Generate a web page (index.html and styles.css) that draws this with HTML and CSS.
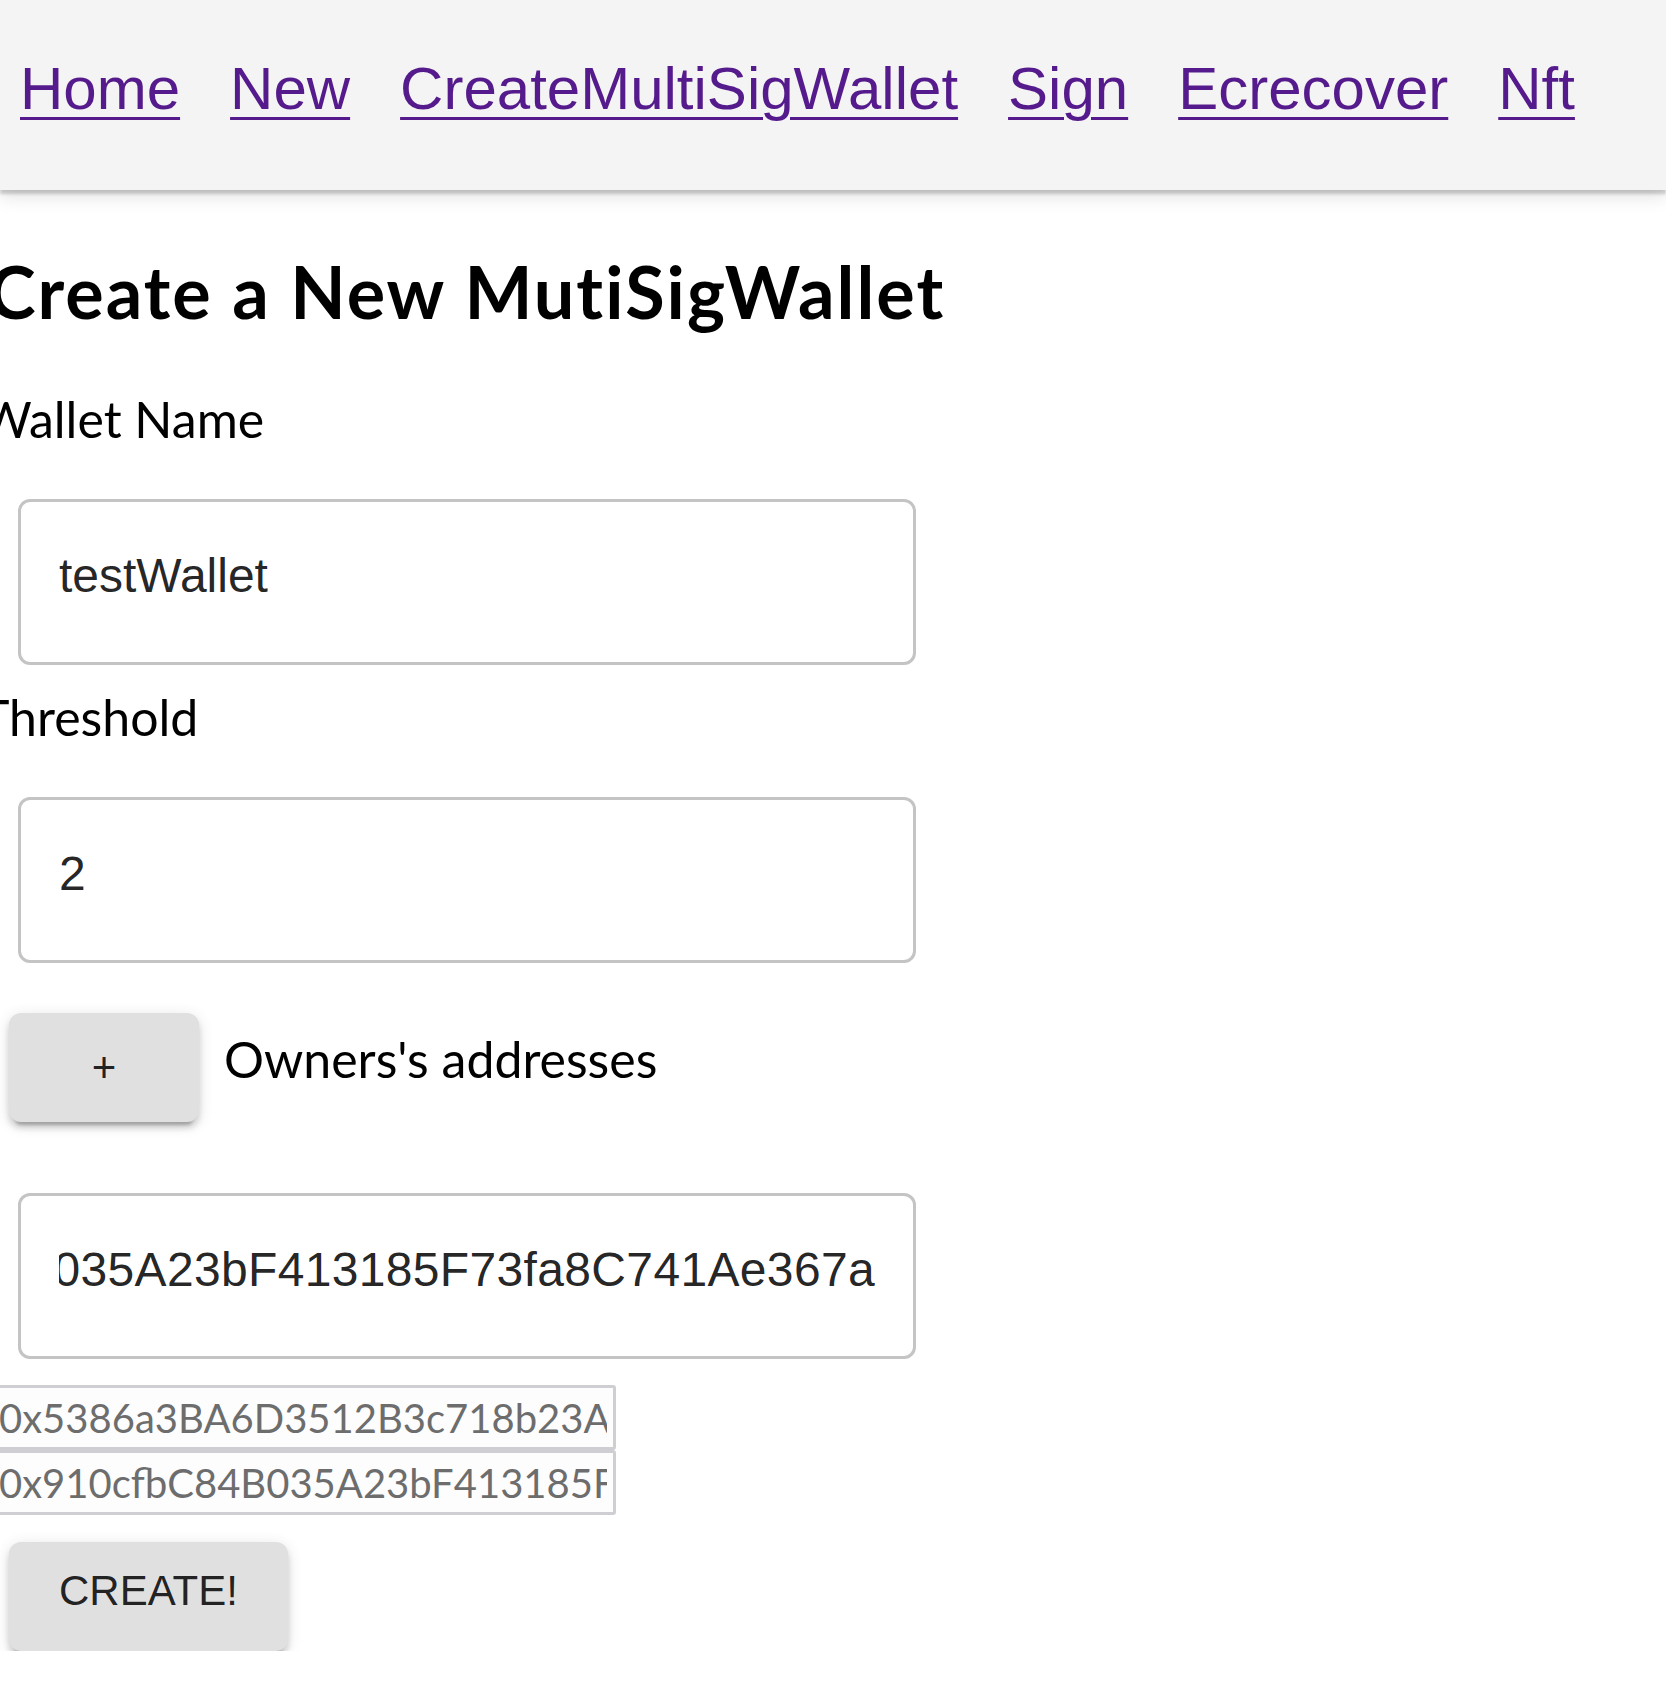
FILE: index.html
```html
<!DOCTYPE html>
<html lang="en">
<head>
<meta charset="utf-8">
<title>Create a New MutiSigWallet</title>
<link rel="stylesheet" href="styles.css">
</head>
<body>
<nav class="topbar">
  <a class="nav-link" href="#">Home</a>
  <a class="nav-link" href="#">New</a>
  <a class="nav-link" href="#">CreateMultiSigWallet</a>
  <a class="nav-link" href="#">Sign</a>
  <a class="nav-link" href="#">Ecrecover</a>
  <a class="nav-link" href="#">Nft</a>
</nav>
<main class="page">
  <h2 class="title">Create a New MutiSigWallet</h2>
  <form class="wallet-form">
    <label class="field-label" for="wallet-name">Wallet Name</label>
    <input class="field" id="wallet-name" type="text" value="testWallet">
    <label class="field-label label-threshold" for="threshold">Threshold</label>
    <input class="field" id="threshold" type="text" value="2">
    <div class="owners-row">
      <button class="btn btn-add" type="button">+</button>
      <span class="owners-label">Owners's addresses</span>
    </div>
    <div class="field field-scroll">
      <div class="field-clip"><span class="field-value">0x910cfbC84B035A23bF413185F73fa8C741Ae367a</span></div>
    </div>
    <ul class="owner-list">
      <li><input class="owner-input" type="text" disabled value="0x5386a3BA6D3512B3c718b23AC0e5F91a7dB2E4c6"></li>
      <li><input class="owner-input" type="text" disabled value="0x910cfbC84B035A23bF413185F73fa8C741Ae367a"></li>
    </ul>
    <button class="btn btn-create" type="button">CREATE!</button>
  </form>
</main>
</body>
</html>
```
FILE: styles.css
```css
html, body {
  margin: 0;
  padding: 0;
  background: #ffffff;
}
body {
  overflow: hidden;
  font-family: "Lato", "Noto Sans", sans-serif;
  color: #000;
}
.topbar {
  height: 190px;
  box-sizing: border-box;
  background: #f4f4f4;
  display: flex;
  align-items: flex-start;
  gap: 50px;
  padding: 54px 0 0 20px;
  box-shadow: 0 4px 3px rgba(0, 0, 0, 0.18), 0 8px 16px rgba(0, 0, 0, 0.10);
  position: relative;
  z-index: 1;
}
.nav-link {
  font-family: "Liberation Sans", Arial, sans-serif;
  font-size: 60px;
  line-height: 69px;
  color: #551a8b;
  text-decoration: underline;
  text-decoration-thickness: 3px;
  text-underline-offset: 8px;
}
.page {
  margin-left: -20px;
}
.title {
  font-family: "Lato", "Noto Sans", sans-serif;
  font-weight: 700;
  font-size: 72px;
  line-height: 86px;
  letter-spacing: 2px;
  margin: 58px 0 0 8px;
  white-space: nowrap;
}
.wallet-form {
  display: flex;
  flex-direction: column;
  align-items: flex-start;
}
.field-label {
  font-size: 50px;
  line-height: 60px;
  margin-top: 55px;
  white-space: nowrap;
}
.label-threshold {
  margin-top: 22px;
}
.field {
  box-sizing: border-box;
  width: 898px;
  height: 166px;
  margin: 50px 0 0 38px;
  padding: 46px 38px 59px;
  border: 3px solid #c4c4c4;
  border-radius: 12px;
  font-family: "Liberation Sans", Arial, sans-serif;
  font-size: 48px;
  line-height: 55px;
  color: rgba(0, 0, 0, 0.87);
  background: #fff;
  outline: none;
}
.owners-row {
  display: flex;
  align-items: flex-start;
  gap: 25px;
  margin: 50px 0 0 29px;
}
.btn {
  box-sizing: border-box;
  border: 0;
  border-radius: 12px;
  background: #e0e0e0;
  color: rgba(0, 0, 0, 0.87);
  font-family: "Liberation Sans", Arial, sans-serif;
  font-size: 42px;
  line-height: 73px;
  padding: 18px 48px;
  box-shadow: 0 9px 3px -6px rgba(0, 0, 0, 0.2), 0 6px 6px 0 rgba(0, 0, 0, 0.14), 0 3px 15px 0 rgba(0, 0, 0, 0.12);
  cursor: pointer;
}
.btn-add {
  width: 190px;
  height: 109px;
}
.owners-label {
  font-size: 50px;
  line-height: 60px;
  padding-top: 16px;
  white-space: nowrap;
}
.field-scroll {
  margin-top: 71px;
}
.field-clip {
  overflow: hidden;
  display: flex;
  justify-content: flex-end;
  white-space: nowrap;
}
.field-value {
  flex: none;
  letter-spacing: 0.34px;
}
.owner-list {
  list-style: none;
  margin: 26px 0 0 10px;
  padding: 0;
}
.owner-input {
  display: block;
  box-sizing: border-box;
  width: 626px;
  height: 65px;
  margin: 0;
  padding: 3px 6px;
  border: 3px solid #cfcfd3;
  border-radius: 3px;
  background: #fdfdfd;
  font-family: "Lato", "Noto Sans", sans-serif;
  font-size: 40px;
  color: #6d6d6d;
}
.btn-create {
  margin: 27px 0 0 29px;
  padding: 12px 50px 24px;
  height: 109px;
}
```
